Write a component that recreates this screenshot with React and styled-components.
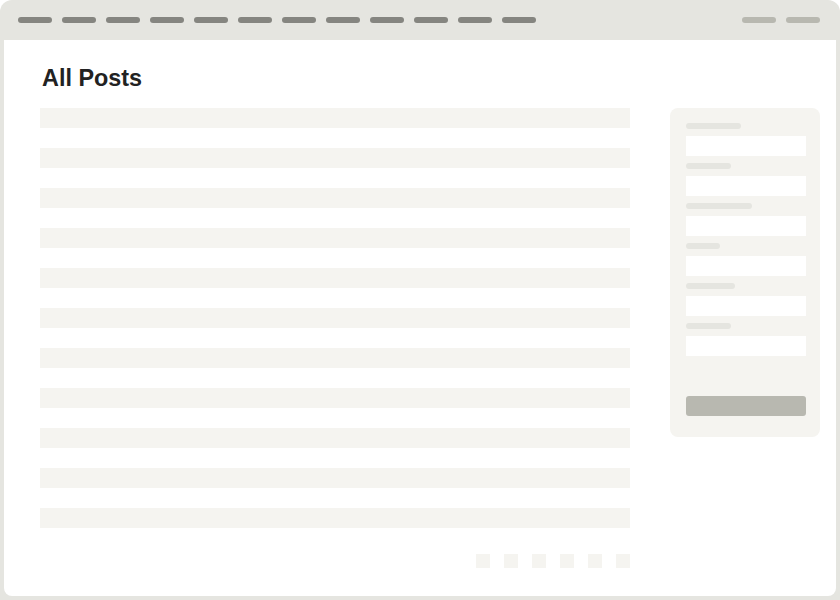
import React from "react";
import styled, { createGlobalStyle } from "styled-components";

const Global = createGlobalStyle`
  html, body { margin: 0; padding: 0; background: #ffffff; }
  body { font-family: "Liberation Sans", Arial, sans-serif; }
`;

const Frame = styled.div`
  width: 840px;
  height: 600px;
  box-sizing: border-box;
  background: #e5e5e0;
  border-radius: 12px 12px 0 0;
  padding: 0 4px 4px;
  display: flex;
  flex-direction: column;
`;

const TopBar = styled.div`
  height: 40px;
  flex: none;
  display: flex;
  align-items: center;
  justify-content: space-between;
  padding: 0 16px 0 14px;
`;

const PillGroup = styled.div`
  display: flex;
  gap: 10px;
`;

const Pill = styled.div`
  width: 34px;
  height: 6px;
  border-radius: 3px;
  background: ${(p) => (p.$light ? "#b8b8b0" : "#858580")};
`;

const Page = styled.div`
  flex: 1;
  background: #ffffff;
  border-radius: 0 0 8px 8px;
  padding: 26px 16px 0 36px;
  display: flex;
  flex-direction: column;
`;

const Title = styled.h1`
  margin: 0 0 17px 2px;
  font-size: 23.4px;
  line-height: 25px;
  font-weight: 700;
  color: #222222;
`;

const Body = styled.div`
  display: flex;
  gap: 40px;
  align-items: flex-start;
`;

const ListCol = styled.div`
  width: 590px;
  display: flex;
  flex-direction: column;
`;

const Rows = styled.div`
  display: flex;
  flex-direction: column;
  gap: 20px;
`;

const Row = styled.div`
  height: 20px;
  background: #f5f4f0;
`;

const Pager = styled.div`
  margin-top: 26px;
  display: flex;
  justify-content: flex-end;
  gap: 14px;
`;

const PageBox = styled.div`
  width: 14px;
  height: 14px;
  background: #f5f4f0;
`;

const Side = styled.div`
  width: 150px;
  box-sizing: border-box;
  background: #f5f4f0;
  border-radius: 8px;
  padding: 15px 14px 21px 16px;
  display: flex;
  flex-direction: column;
`;

const Field = styled.div`
  display: flex;
  flex-direction: column;
  gap: 7px;
  margin-bottom: 7px;
`;

const Label = styled.div`
  height: 6px;
  border-radius: 3px;
  background: #e5e5e0;
`;

const Input = styled.div`
  width: 120px;
  height: 20px;
  background: #ffffff;
`;

const Button = styled.div`
  margin-top: 33px;
  width: 120px;
  height: 20px;
  border-radius: 3px;
  background: #b8b8b0;
`;

const labelWidths = [55, 45, 66, 34, 49, 45];

export default function App() {
  return (
    <>
      <Global />
      <Frame>
        <TopBar>
          <PillGroup>
            {Array.from({ length: 12 }).map((_, i) => (
              <Pill key={i} />
            ))}
          </PillGroup>
          <PillGroup>
            <Pill $light />
            <Pill $light />
          </PillGroup>
        </TopBar>
        <Page>
          <Title>All Posts</Title>
          <Body>
            <ListCol>
              <Rows>
                {Array.from({ length: 11 }).map((_, i) => (
                  <Row key={i} />
                ))}
              </Rows>
              <Pager>
                {Array.from({ length: 6 }).map((_, i) => (
                  <PageBox key={i} />
                ))}
              </Pager>
            </ListCol>
            <Side>
              {labelWidths.map((w, i) => (
                <Field key={i}>
                  <Label style={{ width: w }} />
                  <Input />
                </Field>
              ))}
              <Button />
            </Side>
          </Body>
        </Page>
      </Frame>
    </>
  );
}
